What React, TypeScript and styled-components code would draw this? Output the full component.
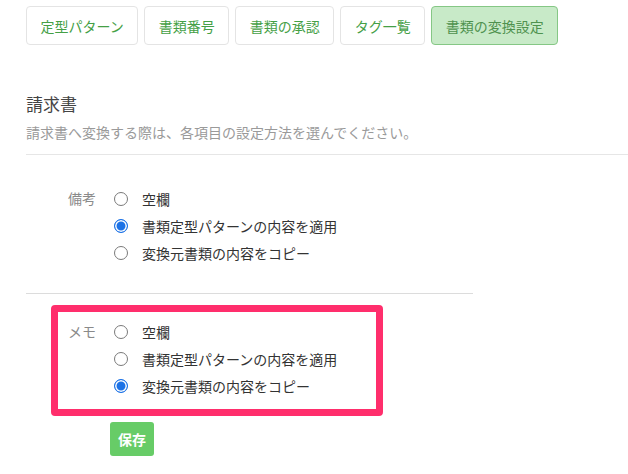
import React, { useState } from "react";
import styled, { createGlobalStyle } from "styled-components";

const Global = createGlobalStyle`
  html, body { margin: 0; padding: 0; background: #fff; }
  body {
    font-family: "Noto Sans CJK JP", "Noto Sans", "Liberation Sans", sans-serif;
    color: #333;
  }
`;

const Page = styled.div`
  padding: 6px 0 0 26px;
`;

const Tabs = styled.nav`
  display: flex;
  gap: 6px;
`;

const Tab = styled.button<{ $active?: boolean }>`
  box-sizing: border-box;
  height: 39px;
  padding: 0 13.5px;
  border-radius: 4px;
  border: 1px solid ${(p) => (p.$active ? "#85c785" : "#e4e4e4")};
  background: ${(p) => (p.$active ? "#c8eac8" : "#fff")};
  color: ${(p) => (p.$active ? "#4f924f" : "#45a046")};
  font-family: inherit;
  font-size: 14px;
  line-height: 1;
  cursor: pointer;
`;

const Header = styled.header`
  margin-top: 47px;
  padding-bottom: 12px;
  border-bottom: 1px solid #e6e6e6;
`;

const Title = styled.h2`
  margin: 0;
  font-size: 17px;
  line-height: 24px;
  font-weight: 400;
  color: #444;
`;

const Description = styled.p`
  margin: 6px 0 0;
  font-size: 14px;
  line-height: 20px;
  color: #9a9a9a;
`;

const Field = styled.div<{ $top: number }>`
  display: flex;
  margin-top: ${(p) => p.$top}px;
`;

const Label = styled.div`
  width: 70px;
  text-align: right;
  font-size: 14px;
  line-height: 27px;
  color: #8a8a8a;
`;

const Options = styled.div`
  display: flex;
  flex-direction: column;
  margin-left: 18px;
`;

const Option = styled.label`
  display: flex;
  align-items: center;
  height: 27px;
  font-size: 14px;
  color: #333;
  cursor: pointer;
`;

const Radio = styled.input`
  appearance: none;
  -webkit-appearance: none;
  box-sizing: border-box;
  width: 14px;
  height: 14px;
  margin: 0 14px 0 0;
  border-radius: 50%;
  border: 1px solid #7a7a7a;
  background: #fff;
  &:checked {
    border-color: #1c72e6;
    background: #1c72e6;
    box-shadow: inset 0 0 0 1.5px #fff;
  }
`;

const Divider = styled.hr`
  width: 447px;
  margin: 27px 0 0;
  border: 0;
  border-top: 1px solid #dcdcdc;
`;

const Highlight = styled.div`
  position: relative;
`;

const HighlightFrame = styled.div`
  position: absolute;
  top: -13px;
  left: 25px;
  width: 332px;
  height: 111px;
  box-sizing: border-box;
  border: 7px solid #ff2e6c;
  border-radius: 4px;
  pointer-events: none;
`;

const SaveButton = styled.button`
  margin: 23px 0 0 84px;
  height: 34px;
  padding: 0 8px;
  border: 0;
  border-radius: 3px;
  background: #67cc67;
  color: #fff;
  font-family: inherit;
  font-size: 14px;
  font-weight: 700;
  cursor: pointer;
`;

const tabs = ["定型パターン", "書類番号", "書類の承認", "タグ一覧", "書類の変換設定"];
const choices = ["空欄", "書類定型パターンの内容を適用", "変換元書類の内容をコピー"];

function RadioGroup({
  name,
  label,
  value,
  onChange,
  top,
}: {
  name: string;
  label: string;
  value: number;
  onChange: (v: number) => void;
  top: number;
}) {
  return (
    <Field $top={top}>
      <Label>{label}</Label>
      <Options>
        {choices.map((c, i) => (
          <Option key={c}>
            <Radio type="radio" name={name} checked={value === i} onChange={() => onChange(i)} />
            {c}
          </Option>
        ))}
      </Options>
    </Field>
  );
}

export default function App() {
  const [note, setNote] = useState(1);
  const [memo, setMemo] = useState(2);
  return (
    <>
      <Global />
      <Page>
        <Tabs>
          {tabs.map((t, i) => (
            <Tab key={t} $active={i === tabs.length - 1}>
              {t}
            </Tab>
          ))}
        </Tabs>
        <Header>
          <Title>請求書</Title>
          <Description>請求書へ変換する際は、各項目の設定方法を選んでください。</Description>
        </Header>
        <RadioGroup name="note" label="備考" value={note} onChange={setNote} top={30} />
        <Divider />
        <Highlight>
          <HighlightFrame />
          <RadioGroup name="memo" label="メモ" value={memo} onChange={setMemo} top={24} />
        </Highlight>
        <SaveButton>保存</SaveButton>
      </Page>
    </>
  );
}
